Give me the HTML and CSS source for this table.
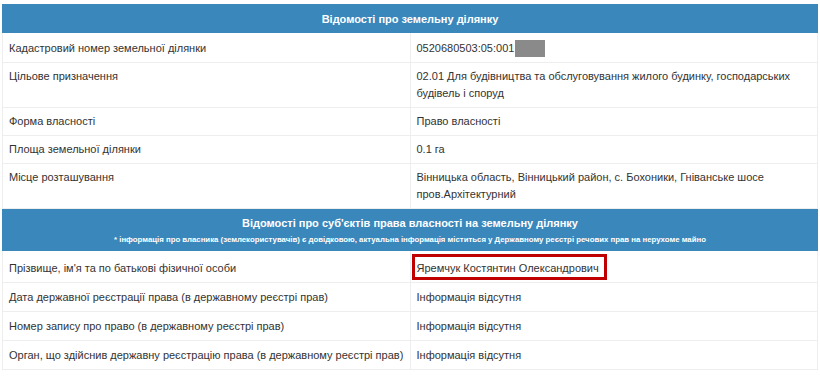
FILE: index.html
```html
<!DOCTYPE html>
<html lang="uk">
<head>
<meta charset="utf-8">
<link rel="stylesheet" href="styles.css">
</head>
<body>
<div class="wrap">
  <table class="info">
    <tr class="head"><th colspan="2">Відомості про земельну ділянку</th></tr>
    <tr class="first-row"><td class="k">Кадастровий номер земельної ділянки</td><td class="v">0520680503:05:001<span class="redact"></span></td></tr>
    <tr><td class="k">Цільове призначення</td><td class="v">02.01 Для будівництва та обслуговування жилого будинку, господарських будівель і споруд</td></tr>
    <tr><td class="k">Форма власності</td><td class="v">Право власності</td></tr>
    <tr><td class="k">Площа земельної ділянки</td><td class="v">0.1 га</td></tr>
    <tr><td class="k">Місце розташування</td><td class="v">Вінницька область, Вінницький район, с. Бохоники, Гніванське шосе пров.Архітектурний</td></tr>
    <tr class="head head2"><th colspan="2">Відомості про суб'єктів права власності на земельну ділянку<div class="note">* інформація про власника (землекористувачів) є довідковою, актуальна інформація міститься у Державному реєстрі речових прав на нерухоме майно</div></th></tr>
    <tr class="name-row"><td class="k">Прізвище, ім'я та по батькові фізичної особи</td><td class="v"><span class="mark">Яремчук Костянтин Олександрович</span></td></tr>
    <tr class="lower"><td class="k">Дата державної реєстрації права (в державному реєстрі прав)</td><td class="v">Інформація відсутня</td></tr>
    <tr class="lower"><td class="k">Номер запису про право (в державному реєстрі прав)</td><td class="v">Інформація відсутня</td></tr>
    <tr class="lower"><td class="k">Орган, що здійснив державну реєстрацію права (в державному реєстрі прав)</td><td class="v">Інформація відсутня</td></tr>
  </table>
</div>
</body>
</html>
```
FILE: styles.css
```css
html, body { margin: 0; padding: 0; background: #fff; }
body {
  font-family: "Liberation Sans", Arial, sans-serif;
  font-size: 11px;
  color: #333;
}
.wrap { padding: 4px 2px 0 2px; }
.info {
  width: 100%;
  border-collapse: collapse;
  border: 1px solid #eee;
}
.info td {
  padding: 5px 6px;
  line-height: 17px;
  border: 1px solid #eee;
  vertical-align: top;
  text-align: left;
}
.info td.k { width: 50%; }
.info .first-row td { padding: 7px 6px 5px; }
.info .lower td { padding: 6px 6px 5px; }
.head th {
  background: #3a87bb;
  color: #fff;
  font-weight: bold;
  text-align: center;
  padding: 5px 6px 4px;
  line-height: 18px;
  border: 1px solid #3a87bb;
}
.head2 th { padding: 5px 6px 4px; }
.note {
  font-size: 7.8px;
  line-height: 12px;
  margin-top: 2px;
}
.redact {
  display: inline-block;
  width: 30px;
  height: 17px;
  background: #8a8a8a;
  vertical-align: top;
  margin-left: 1px;
}
.info .name-row td { padding: 9px 6px 5px; }
.mark {
  position: relative;
  display: inline-block;
  line-height: 17px;
  vertical-align: top;
}
.mark::after {
  content: "";
  position: absolute;
  left: -5px;
  right: -8px;
  top: -6px;
  bottom: -3px;
  border: 3px solid #c00000;
}
```
